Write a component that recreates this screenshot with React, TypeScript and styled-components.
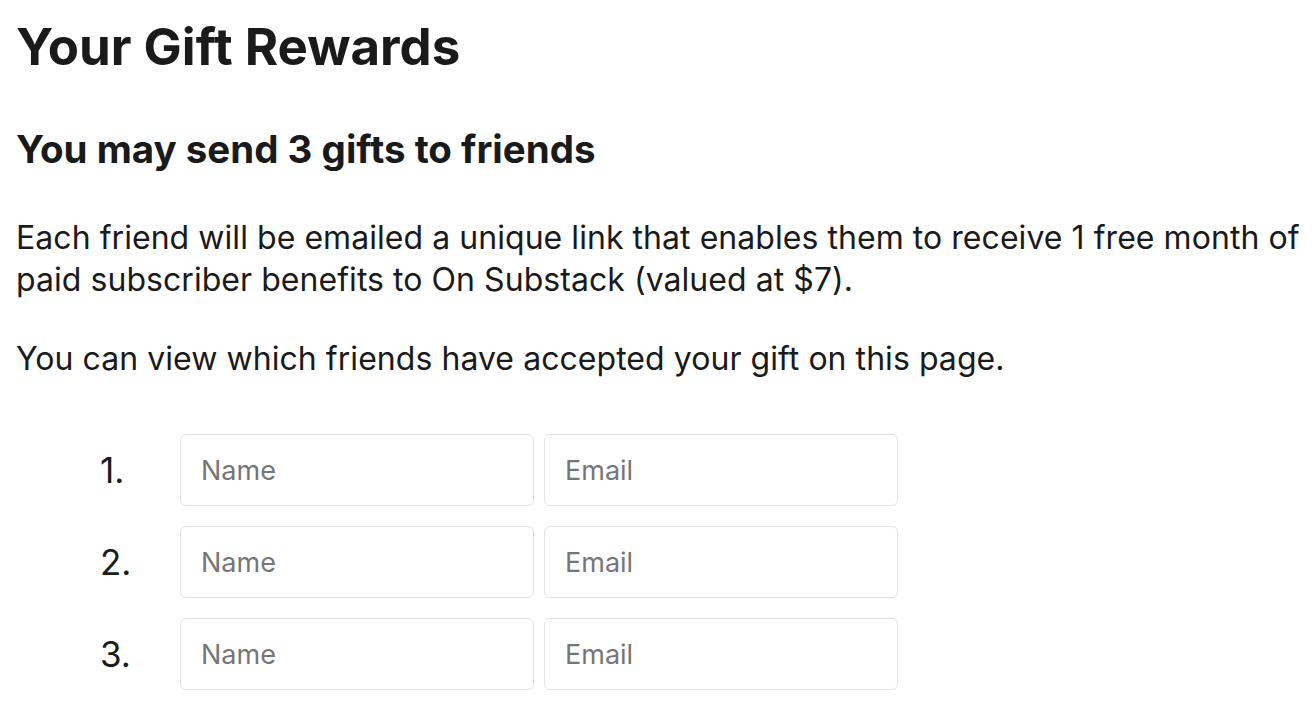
import React from "react";
import styled, { createGlobalStyle } from "styled-components";

const Global = createGlobalStyle`
  html, body { margin: 0; padding: 0; background: #ffffff; }
  body { font-family: Inter, "Noto Sans", sans-serif; color: #1a1a1a; -webkit-font-smoothing: antialiased; }
  * { box-sizing: border-box; }
`;

const Page = styled.main`
  padding: 0 16px;
`;

const Title = styled.h1`
  margin: 0;
  padding-top: 19px;
  font-size: 51px;
  line-height: 56px;
  font-weight: 700;
  letter-spacing: 0;
`;

const Subtitle = styled.h2`
  margin: 52px 0 0;
  font-size: 38.5px;
  line-height: 44px;
  font-weight: 700;
  letter-spacing: 0;
`;

const Paragraph = styled.p<{ $gap: number }>`
  margin: ${(p) => p.$gap}px 0 0;
  font-size: 32px;
  line-height: 42px;
  font-weight: 400;
  letter-spacing: 0.05px;
`;

const List = styled.ol`
  list-style: none;
  margin: 54px 0 0;
  padding: 0;
  display: flex;
  flex-direction: column;
  gap: 20px;
`;

const Row = styled.li`
  display: flex;
  align-items: center;
  gap: 10px;
`;

const Num = styled.span`
  width: 154px;
  padding-left: 84px;
  font-size: 35px;
  line-height: 42px;
`;

const Field = styled.input`
  width: 354px;
  height: 72px;
  border: 1px solid #e3e3e3;
  border-radius: 6px;
  padding: 0 20px;
  font-family: Inter, "Noto Sans", sans-serif;
  font-size: 27px;
  color: #1a1a1a;
  background: #fff;
  outline: none;
  &::placeholder { color: #767676; }
`;

export default function App() {
  return (
    <>
      <Global />
      <Page>
        <Title>Your Gift Rewards</Title>
        <Subtitle>You may send 3 gifts to friends</Subtitle>
        <Paragraph $gap={46}>
          Each friend will be emailed a unique link that enables them to receive 1 free month of paid subscriber benefits to On Substack (valued at $7).
        </Paragraph>
        <Paragraph $gap={37}>You can view which friends have accepted your gift on this page.</Paragraph>
        <List>
          {[1, 2, 3].map((n) => (
            <Row key={n}>
              <Num>{n}.</Num>
              <Field placeholder="Name" />
              <Field placeholder="Email" />
            </Row>
          ))}
        </List>
      </Page>
    </>
  );
}
